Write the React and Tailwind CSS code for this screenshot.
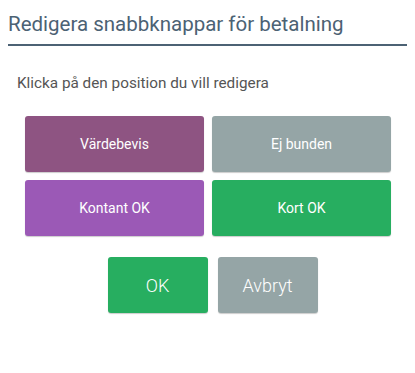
import React from 'react';

const slots = [
    { label: 'Värdebevis', color: 'bg-[#8e5482]' },
    { label: 'Ej bunden', color: 'bg-[#95a5a6]' },
    { label: 'Kontant OK', color: 'bg-[#9b59b6]' },
    { label: 'Kort OK', color: 'bg-[#27ae60]' },
];

const App = () => {
    return (
        <div className="w-[415px] h-[373px] bg-white font-['Roboto',sans-serif]">
            <div className="px-2 pt-[9px]">
                <h1 className="text-[20.5px] leading-[30px] text-[#4c6274] pb-[5px] border-b-2 border-[#4c6274]">
                    Redigera snabbknappar för betalning
                </h1>
            </div>
            <p className="pl-[17px] mt-[27px] text-[15.3px] leading-[20px] text-[#555]">
                Klicka på den position du vill redigera
            </p>
            <div className="ml-[25px] mt-[23px] grid grid-cols-[179px_179px] gap-[8px]">
                {slots.map((s) => (
                    <button
                        key={s.label}
                        className={`${s.color} h-[56px] rounded-[3px] shadow-[0_1px_1px_rgba(0,0,0,0.2)] text-white text-[14px]`}
                    >
                        {s.label}
                    </button>
                ))}
            </div>
            <div className="flex justify-center gap-[10px] mt-[21px] pl-[10px]">
                <button className="w-[100px] h-[56px] rounded-[3px] bg-[#27ae60] text-white text-[18px] font-light shadow-[0_1px_1px_rgba(0,0,0,0.2)]">
                    OK
                </button>
                <button className="w-[100px] h-[56px] rounded-[3px] bg-[#95a5a6] text-white text-[18px] font-light shadow-[0_1px_1px_rgba(0,0,0,0.2)]">
                    Avbryt
                </button>
            </div>
        </div>
    );
};

export default App;
